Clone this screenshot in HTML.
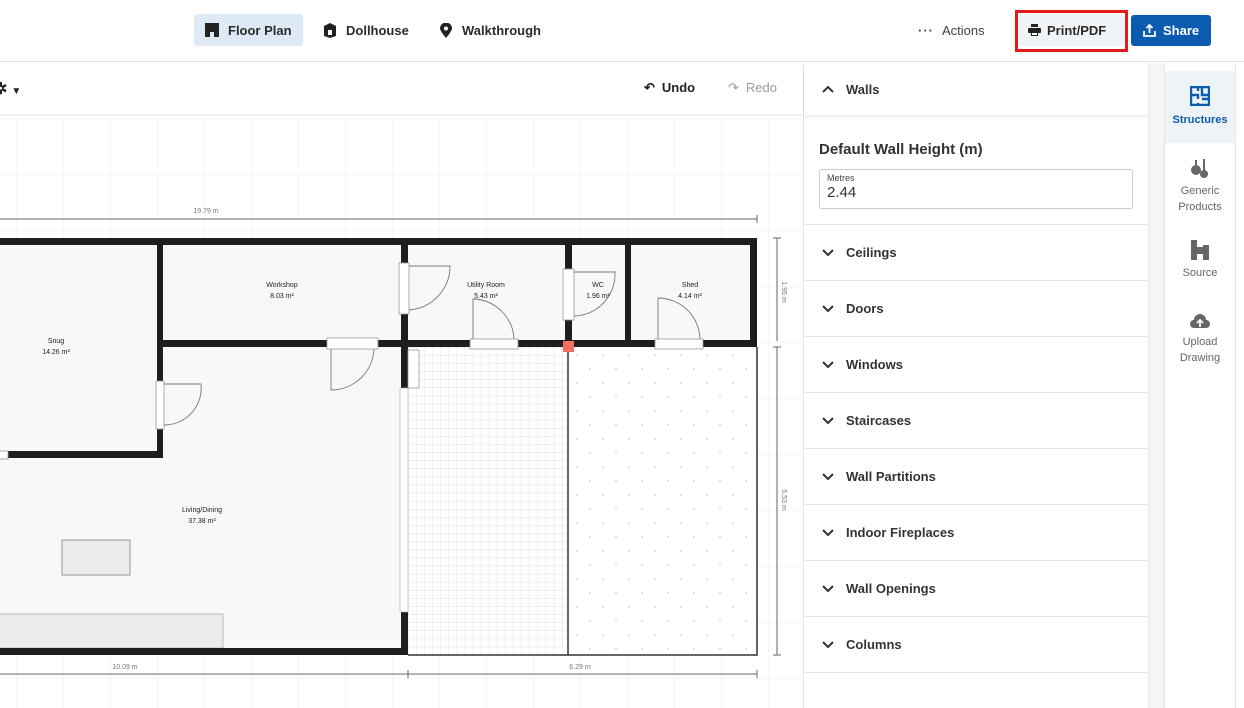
<!DOCTYPE html>
<html><head><meta charset="utf-8"><style>
*{box-sizing:border-box;margin:0;padding:0}
body{width:1244px;height:708px;overflow:hidden;background:#fff;font-family:"Liberation Sans",sans-serif;color:#222;position:relative}
.hdr{position:absolute;left:0;top:0;width:1244px;height:62px;border-bottom:1px solid #e3e3e3;background:#fff}
.btn{position:absolute;top:14px;height:32px;display:flex;align-items:center;font-size:13px;font-weight:bold;color:#2b2b2b;border-radius:3px}
.canvas{position:absolute;left:0;top:63px;width:802px;height:645px;background:#fff;overflow:hidden}
.panel{position:absolute;left:803px;top:63px;width:345px;height:645px;border-left:1px solid #e3e3e3;background:#fff}
.row{height:56px;border-bottom:1px solid #e6e6e6;display:flex;align-items:center;padding-left:18px;font-size:13px;font-weight:bold;color:#333}
.row svg{margin-right:12px}
.nav{position:absolute;left:1164px;top:63px;width:72px;height:645px;border-left:1px solid #e6e6e6;border-right:1px solid #e6e6e6}
.ni{display:flex;flex-direction:column;align-items:center;justify-content:center;font-size:11px;color:#666;text-align:center;line-height:16px}
</style></head><body>
<div class="hdr">
 <div class="btn" style="left:194px;width:109px;background:#dde9f5;padding-left:11px"><svg width="14" height="14" viewBox="0 0 14 14" style="margin-right:9px"><path d="M0 0H14V14H9V9H5V14H0Z" fill="#222"/></svg>Floor Plan</div>
 <div class="btn" style="left:322px"><svg width="16" height="15" viewBox="0 0 16 15" style="margin-right:8px"><path d="M2 3L8 0L14 3V13L8 15L2 13Z" fill="#222"/><rect x="6" y="7" width="4" height="5" fill="#fff"/></svg>Dollhouse</div>
 <div class="btn" style="left:440px"><svg width="12" height="15" viewBox="0 0 12 15" style="margin-right:10px"><path d="M6 15C6 15 0 8 0 5.5A6 6 0 0 1 12 5.5C12 8 6 15 6 15Z" fill="#222"/><circle cx="6" cy="5.5" r="2" fill="#fff"/></svg>Walkthrough</div>
 <div class="btn" style="left:918px;font-weight:normal;color:#444"><span style="letter-spacing:1px;margin-right:8px;font-weight:bold">···</span>Actions</div>
 <div style="position:absolute;left:1015px;top:10px;width:113px;height:42px;border:3px solid #e3191b"></div>
 <div class="btn" style="left:1019px;width:105px;top:14px;background:#f1f4f7;padding-left:9px"><svg width="13" height="12" viewBox="0 0 13 12" style="margin-right:6px"><rect x="3" y="0" width="7" height="3" fill="#222"/><rect x="0" y="4" width="13" height="5" rx="1" fill="#222"/><rect x="3" y="8" width="7" height="4" fill="#222"/><rect x="4" y="9" width="5" height="2" fill="#fff"/></svg>Print/PDF</div>
 <div class="btn" style="left:1131px;width:80px;top:15px;height:31px;background:#0b5cb0;color:#fff;padding-left:12px"><svg width="13" height="13" viewBox="0 0 13 13" style="margin-right:7px" fill="none" stroke="#fff" stroke-width="1.8"><path d="M6.5 9V1M3.5 4L6.5 1L9.5 4M1 7V12H12V7"/></svg>Share</div>
</div>

<div class="canvas">
<svg width="802" height="645" viewBox="0 63 802 645" style="position:absolute;left:0;top:0">
 <defs>
  <pattern id="g" x="16" y="174" width="47" height="56" patternUnits="userSpaceOnUse"><path d="M0 0V56M0 0H47" stroke="#ececec" stroke-width="1" fill="none"/></pattern>
  <pattern id="t" x="408" y="347" width="8.1" height="8.1" patternUnits="userSpaceOnUse"><path d="M0 0V8.1M0 0H8.1" stroke="#d8d8d8" stroke-width="0.8" fill="none"/></pattern>
  <pattern id="d" x="568" y="347" width="26" height="28" patternUnits="userSpaceOnUse"><circle cx="9" cy="8" r="0.9" fill="#ccc"/><circle cx="22" cy="22" r="0.9" fill="#ccc"/></pattern>
 </defs>
 <rect x="0" y="115" width="802" height="593" fill="url(#g)"/>
 <line x1="0" y1="115" x2="802" y2="115" stroke="#e3e3e3"/>
 <rect x="0" y="238" width="408" height="417" fill="#f8f8f8"/>
 <rect x="408" y="238" width="349" height="109" fill="#f8f8f8"/>
 <rect x="408" y="347" width="160" height="308" fill="#fff"/>
 <rect x="408" y="347" width="160" height="308" fill="url(#t)"/>
 <rect x="568" y="347" width="189" height="308" fill="#fff"/>
 <rect x="568" y="347" width="189" height="308" fill="url(#d)"/>
 <path d="M568 347V655H757V347M408 655H568" stroke="#333" stroke-width="1.5" fill="none"/>
 <rect x="62" y="540" width="68" height="35" fill="#ececec" stroke="#999"/>
 <rect x="-2" y="614" width="225" height="34" fill="#ececec" stroke="#bbb"/>
 <g fill="#1e1e1e">
  <rect x="0" y="238" width="757" height="7"/>
  <rect x="157" y="238" width="6" height="220"/>
  <rect x="0" y="451" width="163" height="7"/>
  <rect x="157" y="340" width="600" height="7"/>
  <rect x="401" y="238" width="7" height="150"/>
  <rect x="401" y="612" width="7" height="43"/>
  <rect x="0" y="648" width="408" height="7"/>
  <rect x="565" y="238" width="7" height="109"/>
  <rect x="625" y="238" width="6" height="105"/>
  <rect x="750" y="238" width="7" height="109"/>
 </g>
 <rect x="400" y="388" width="8" height="224" fill="#fff" stroke="#aaa" stroke-width="0.6"/>
 <rect x="563" y="341" width="11" height="11" fill="#f07062"/>
 <g fill="#fff" stroke="#999" stroke-width="0.8">
  <rect x="327" y="338" width="51" height="11"/>
  <rect x="156" y="381" width="8" height="48"/>
  <rect x="399" y="263" width="10" height="51"/>
  <rect x="470" y="339" width="48" height="10"/>
  <rect x="563" y="269" width="11" height="51"/>
  <rect x="655" y="339" width="48" height="10"/>
  <rect x="408" y="350" width="11" height="38"/>
  <rect x="-3" y="451" width="11" height="8"/>
 </g>
 <g fill="none" stroke="#777" stroke-width="0.9">
  <path d="M331 349V390A43 43 0 0 0 374 349"/>
  <path d="M164 384H201A37 37 0 0 1 164 425"/>
  <path d="M409 266H450A44 44 0 0 1 409 310"/>
  <path d="M473 339V299A42 42 0 0 1 514 339"/>
  <path d="M574 272H615A42 42 0 0 1 574 316"/>
  <path d="M658 339V298A42 42 0 0 1 700 339"/>
 </g>
 <g font-size="7" text-anchor="middle" fill="#222">
  <text x="56" y="343">Snug</text><text x="56" y="354">14.26 m²</text>
  <text x="282" y="287">Workshop</text><text x="282" y="298">8.03 m²</text>
  <text x="486" y="287">Utility Room</text><text x="486" y="298">5.43 m²</text>
  <text x="598" y="287">WC</text><text x="598" y="298">1.96 m²</text>
  <text x="690" y="287">Shed</text><text x="690" y="298">4.14 m²</text>
  <text x="202" y="512">Living/Dining</text><text x="202" y="523">37.38 m²</text>
 </g>
 <g stroke="#666" stroke-width="1" fill="none">
  <path d="M0 219H757M757 215V223"/>
  <path d="M0 674H757M408 670V678M757 670V678"/>
  <path d="M777 238V341M773 238H781M773 347H781M777 347V655M773 655H781"/>
 </g>
 <g font-size="7" fill="#777" text-anchor="middle">
  <text x="206" y="213">19.79 m</text>
  <text x="125" y="669">10.09 m</text>
  <text x="580" y="669">6.29 m</text>
  <text transform="translate(782,292) rotate(90)">1.95 m</text>
  <text transform="translate(782,500) rotate(90)">5.53 m</text>
 </g>
</svg>
 <div style="position:absolute;left:-6px;top:16px;font-size:16px;font-weight:bold">✲<span style="font-size:10px;margin-left:4px">▼</span></div>
 <div style="position:absolute;left:644px;top:17px;font-size:13px;font-weight:bold;color:#222"><span style="margin-right:7px">↶</span>Undo</div>
 <div style="position:absolute;left:728px;top:17px;font-size:13px;color:#999"><span style="margin-right:7px">↷</span>Redo</div>
</div>

<div class="panel">
 <div class="row" style="height:52px;border-bottom:none;box-shadow:0 3px 3px rgba(0,0,0,0.06)"><svg width="12" height="8" viewBox="0 0 12 8"><path d="M1 7L6 2L11 7" stroke="#333" stroke-width="2" fill="none"/></svg>Walls</div>
 <div style="height:110px;border-bottom:1px solid #e6e6e6;padding:26px 15px 0 15px">
  <div style="font-size:15px;font-weight:bold;color:#333">Default Wall Height (m)</div>
  <div style="margin-top:11px;width:314px;height:40px;border:1px solid #ccc;border-radius:3px;padding:3px 7px">
   <div style="font-size:9px;color:#444">Metres</div><div style="font-size:15px;color:#333;margin-top:1px">2.44</div></div>
 </div>
 <div class="row"><svg width="12" height="8" viewBox="0 0 12 8"><path d="M1 1L6 6L11 1" stroke="#333" stroke-width="2" fill="none"/></svg>Ceilings</div>
 <div class="row"><svg width="12" height="8" viewBox="0 0 12 8"><path d="M1 1L6 6L11 1" stroke="#333" stroke-width="2" fill="none"/></svg>Doors</div>
 <div class="row"><svg width="12" height="8" viewBox="0 0 12 8"><path d="M1 1L6 6L11 1" stroke="#333" stroke-width="2" fill="none"/></svg>Windows</div>
 <div class="row"><svg width="12" height="8" viewBox="0 0 12 8"><path d="M1 1L6 6L11 1" stroke="#333" stroke-width="2" fill="none"/></svg>Staircases</div>
 <div class="row"><svg width="12" height="8" viewBox="0 0 12 8"><path d="M1 1L6 6L11 1" stroke="#333" stroke-width="2" fill="none"/></svg>Wall Partitions</div>
 <div class="row"><svg width="12" height="8" viewBox="0 0 12 8"><path d="M1 1L6 6L11 1" stroke="#333" stroke-width="2" fill="none"/></svg>Indoor Fireplaces</div>
 <div class="row"><svg width="12" height="8" viewBox="0 0 12 8"><path d="M1 1L6 6L11 1" stroke="#333" stroke-width="2" fill="none"/></svg>Wall Openings</div>
 <div class="row"><svg width="12" height="8" viewBox="0 0 12 8"><path d="M1 1L6 6L11 1" stroke="#333" stroke-width="2" fill="none"/></svg>Columns</div>
</div>
<div style="position:absolute;left:1148px;top:63px;width:16px;height:645px;background:#f5f5f5;border-left:1px solid #e6e6e6"></div>
<div class="nav">
 <div class="ni" style="margin-top:8px;background:#eef3f8;color:#0b5cb0;font-weight:bold;height:72px"><svg width="20" height="20" viewBox="0 0 20 20" style="margin-bottom:6px"><path d="M1 1H19V19H1Z M1 9H8V13M8 5V1M12 1V9H19M12 13H19M8 17V19" stroke="#0b5cb0" stroke-width="2.4" fill="none"/></svg>Structures</div>
 <div class="ni" style="height:80px;padding-top:6px"><svg width="20" height="20" viewBox="0 0 20 20" style="margin-bottom:5px"><circle cx="6" cy="12" r="5" fill="#666"/><rect x="5" y="2" width="2" height="5" fill="#666"/><rect x="13" y="1" width="2" height="12" fill="#666"/><circle cx="14" cy="16" r="4" fill="#666"/></svg>Generic<br>Products</div>
 <div class="ni" style="height:70px;padding-top:4px"><svg width="18" height="20" viewBox="0 0 18 20" style="margin-bottom:5px"><path d="M0 0H6V7H12V5H18V20H12V14H6V20H0Z" fill="#666"/></svg>Source</div>
 <div class="ni" style="height:90px;padding-top:2px"><svg width="20" height="16" viewBox="0 0 20 16" style="margin-bottom:5px"><path d="M4 15A4 4 0 0 1 4 7A6 6 0 0 1 16 7A4 4 0 0 1 16 15Z" fill="#666"/><path d="M10 14V8M7 10L10 7L13 10" stroke="#fff" stroke-width="1.8" fill="none"/></svg>Upload<br>Drawing</div>
</div>
</body></html>
